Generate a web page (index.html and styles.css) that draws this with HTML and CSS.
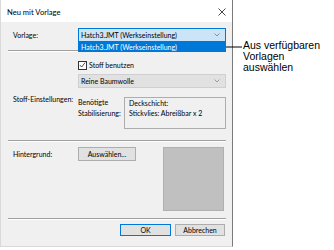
FILE: index.html
```html
<!DOCTYPE html>
<html lang="de">

<head>
  <meta charset="UTF-8">
  <title>Neu mit Vorlage</title>
  <link rel="stylesheet" href="styles.css">
</head>

<body>
  <div class="screen">
    <div class="dialog">
      <div class="titlebar">
        <span>Neu mit Vorlage</span>
        <svg class="close" width="8" height="8" viewBox="0 0 8 8">
          <path d="M0.5 0.5 L7.5 7.5 M7.5 0.5 L0.5 7.5" stroke="#333" stroke-width="0.9" fill="none" />
        </svg>
      </div>
      <div class="content">
        <div class="row row-template">
          <span class="label">Vorlage:</span>
          <div class="combo combo-open">
            <span>Hatch3.JMT (Werkseinstellung)</span>
            <svg class="chevron" width="6" height="4" viewBox="0 0 6 4">
              <path d="M0.5 0.5 L3 3 L5.5 0.5" stroke="#7a7a7a" stroke-width="0.8" fill="none" />
            </svg>
            <div class="combo-list">
              <div class="combo-item">Hatch3.JMT (Werkseinstellung)</div>
            </div>
          </div>
        </div>
        <div class="separator sep-first"></div>
        <div class="row row-check">
          <span></span>
          <label class="check">
            <span class="check-box">
              <svg width="8" height="8" viewBox="0 0 8 8">
                <path d="M1 4 L3 6.3 L7 1.2" stroke="#222" stroke-width="0.9" fill="none" />
              </svg>
            </span>
            Stoff benutzen
          </label>
        </div>
        <div class="row row-fabric-type">
          <span></span>
          <div class="combo combo-plain">
            <span>Reine Baumwolle</span>
            <svg class="chevron" width="6" height="4" viewBox="0 0 6 4">
              <path d="M0.5 0.5 L3 3 L5.5 0.5" stroke="#8a8a8a" stroke-width="0.8" fill="none" />
            </svg>
          </div>
        </div>
        <div class="row row-fabric">
          <span class="label label-fabric">Stoff-Einstellungen:</span>
          <div class="fabric">
            <span class="sublabel">Benötigte<br>Stabilisierung:</span>
            <div class="info">Deckschicht:<br>Stickvlies: Abreißbar x 2</div>
          </div>
        </div>
        <div class="separator sep-second"></div>
        <div class="row row-background">
          <span class="label">Hintergrund:</span>
          <div class="bg-controls">
            <button class="btn btn-choose">Auswählen...</button>
            <div class="swatch"></div>
          </div>
        </div>
        <div class="separator sep-third"></div>
        <div class="actions">
          <button class="btn btn-ok">OK</button>
          <button class="btn btn-cancel">Abbrechen</button>
        </div>
      </div>
    </div>

    <div class="callout">
      <svg class="arrow" width="28" height="11" viewBox="0 0 28 11">
        <path d="M2 7 L8 4.8 L8 9.2 Z" fill="#000" />
        <path d="M7 7 L28 7" stroke="#000" stroke-width="1" />
      </svg>
      <div class="callout-text">Aus verfügbaren<br>Vorlagen<br>auswählen</div>
    </div>
  </div>
</body>

</html>
```

FILE: styles.css
```css
body {
  margin: 0;
  background-color: #ffffff;
  font-family: 'Lato', 'Noto Sans', sans-serif;
  font-size: 7px;
  color: #000000;
}

.screen {
  position: relative;
  width: 334px;
  height: 250px;
  overflow: hidden;
}

.dialog {
  width: 233px;
  height: 247px;
  box-sizing: border-box;
  border-left: 1px solid #d9d9d9;
  border-right: 1px solid #7a7a7a;
  border-bottom: 1px solid #d9d9d9;
  background-color: #f0f0f0;
  display: flex;
  flex-direction: column;
}

.titlebar {
  height: 22px;
  flex-shrink: 0;
  background-color: #ffffff;
  display: flex;
  align-items: center;
  justify-content: space-between;
  padding: 2px 6px 0 6px;
  box-sizing: border-box;
  font-size: 7.6px;
}

.content {
  padding: 6px 6px 0 12px;
  display: flex;
  flex-direction: column;
}

.row {
  display: grid;
  grid-template-columns: 65px 1fr;
  align-items: start;
  white-space: nowrap;
}

.label {
  line-height: 14px;
}

.label-fabric {
  line-height: 10px;
  margin-top: -3px;
}

/* combo boxes */
.combo {
  position: relative;
  height: 14px;
  box-sizing: border-box;
  display: flex;
  align-items: center;
  justify-content: space-between;
  padding: 0 5px 0 2px;
}

.combo-open {
  background-color: #cce4f7;
  border: 1px solid #0078d7;
}

.combo-plain {
  background-color: #e1e1e1;
  border: 1px solid #cfcfcf;
}

.chevron {
  display: block;
}

.combo-list {
  position: absolute;
  top: 13px;
  left: -1px;
  right: -1px;
  height: 10px;
  background-color: #0078d7;
  color: #ffffff;
  z-index: 1;
}

.combo-item {
  line-height: 10px;
  padding-left: 3px;
}

.separator {
  height: 0;
  margin-left: -5px;
  border-top: 1px solid #a0a0a0;
  border-bottom: 1px solid #ffffff;
}

.sep-first {
  margin-top: 8px;
}

.row-check {
  margin-top: 8px;
}

.check {
  display: flex;
  align-items: center;
  gap: 2px;
  height: 10px;
}

.check-box {
  width: 9px;
  height: 9px;
  box-sizing: border-box;
  border: 1px solid #333333;
  background-color: #ffffff;
  display: flex;
  align-items: center;
  justify-content: center;
}

.check-box svg {
  display: block;
}

.row-fabric-type {
  margin-top: 4px;
}

.row-fabric {
  margin-top: 9px;
}

.fabric {
  display: grid;
  grid-template-columns: 46px 1fr;
  align-items: start;
}

.sublabel {
  line-height: 11px;
}

.info {
  height: 32px;
  box-sizing: border-box;
  border: 1px solid #adadad;
  padding: 0 0 0 4px;
  line-height: 10px;
}

.sep-second {
  margin-top: 11px;
}

.row-background {
  margin-top: 5px;
}

.bg-controls {
  display: flex;
  align-items: flex-start;
}

.btn {
  font-family: inherit;
  font-size: inherit;
  color: #000000;
  background-color: #e1e1e1;
  border: 1px solid #adadad;
  padding: 0;
  margin: 0;
  box-sizing: border-box;
}

.btn-choose {
  width: 58px;
  height: 14px;
}

.swatch {
  width: 61px;
  height: 64px;
  margin-left: 27px;
  box-sizing: border-box;
  background-color: #c0c0c0;
  border: 1px solid #b0b0b0;
}

.sep-third {
  margin-top: 7px;
}

.actions {
  margin-top: 4px;
  display: flex;
  justify-content: flex-end;
  gap: 4px;
  padding-right: 1px;
}

.btn-ok {
  width: 51px;
  height: 12px;
  border-color: #0078d7;
}

.btn-cancel {
  width: 50px;
  height: 12px;
}

/* annotation beside the dialog */
.callout {
  position: absolute;
  left: 214px;
  top: 40px;
  display: flex;
  align-items: flex-start;
}

.arrow {
  display: block;
}

.callout-text {
  margin-left: 1px;
  font-family: 'Liberation Sans', Arial, sans-serif;
  font-size: 10.5px;
  line-height: 11px;
  white-space: nowrap;
}
```
